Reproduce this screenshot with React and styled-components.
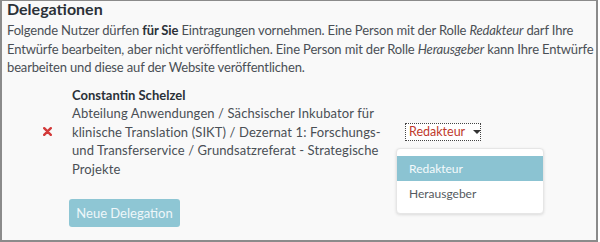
import React from "react";
import styled, { createGlobalStyle } from "styled-components";

const Global = createGlobalStyle`
  html, body {
    margin: 0;
    padding: 0;
    background: #ffffff;
  }
  * {
    box-sizing: border-box;
  }
`;

const Panel = styled.section`
  width: 598px;
  height: 242px;
  background: #f9f9f9;
  border: 2px solid #8b8b8b;
  border-top-width: 1px;
  padding: 0 0 0 5px;
  font-family: Lato, "Noto Sans", sans-serif;
  color: #4a4f55;
  overflow: hidden;
`;

const Title = styled.h2`
  margin: -2px 0 0;
  font-size: 16px;
  font-weight: 700;
  line-height: 20px;
  color: #2b3138;
`;

const Intro = styled.p`
  margin: 2px 0 0;
  font-size: 13px;
  line-height: 18.5px;
  letter-spacing: -0.15px;

  b {
    font-weight: 700;
    color: #2b3138;
  }
`;

const Row = styled.div`
  display: flex;
  align-items: center;
  margin-top: 9px;
  padding-left: 35px;
`;

const Remove = styled.button`
  display: flex;
  align-items: center;
  justify-content: center;
  width: 10px;
  height: 10px;
  padding: 0;
  border: 0;
  background: none;
  cursor: pointer;
`;

const Person = styled.div`
  width: 318px;
  margin-left: 20px;
  font-size: 13px;
  line-height: 18.5px;
  letter-spacing: 0.1px;
`;

const Name = styled.div`
  font-weight: 700;
  color: #2b3138;
  letter-spacing: 0;
`;

const RoleBox = styled.div`
  position: relative;
  margin-left: 15px;
  margin-top: 0;
`;

const Select = styled.div`
  display: flex;
  align-items: center;
  gap: 8px;
  width: 76px;
  height: 18px;
  padding: 0 0 0 3px;
  border: 1px dotted #444;
  background: #ffffff;
  color: #c0392b;
  font-size: 12.5px;
  line-height: 16px;
`;

const Caret = styled.span`
  width: 0;
  height: 0;
  border-left: 4px solid transparent;
  border-right: 4px solid transparent;
  border-top: 4px solid #333;
  margin-top: 1px;
`;

const Menu = styled.ul`
  position: absolute;
  top: 25px;
  left: -9px;
  width: 148px;
  margin: 0;
  padding: 7px 0;
  list-style: none;
  background: #ffffff;
  border: 1px solid #e6e6e6;
  border-radius: 4px;
  box-shadow: 0 1px 3px rgba(0, 0, 0, 0.12);
`;

const Option = styled.li`
  height: 25px;
  padding-left: 12px;
  font-size: 12px;
  line-height: 25px;
  background: ${(p) => (p.$active ? "#8bc3d2" : "transparent")};
  color: ${(p) => (p.$active ? "#f4fafc" : "#555a60")};
`;

const AddButton = styled.button`
  display: block;
  margin: 21px 0 0 62px;
  width: 111px;
  height: 28px;
  padding: 0;
  border: 0;
  border-radius: 3px;
  background: #8ec6d4;
  color: #eef7fa;
  font-family: inherit;
  font-size: 13px;
`;

const CrossIcon = () => (
  <svg width="9" height="9" viewBox="0 0 9 9">
    <path
      d="M1.2 1.2 L7.8 7.8 M7.8 1.2 L1.2 7.8"
      stroke="#d33a3a"
      strokeWidth="2.4"
      strokeLinecap="round"
    />
  </svg>
);

const App = () => {
  return (
    <>
      <Global />
      <Panel>
        <Title>Delegationen</Title>
        <Intro>
          Folgende Nutzer dürfen <b>für Sie</b> Eintragungen vornehmen. Eine
          Person mit der Rolle <i>Redakteur</i> darf Ihre Entwürfe bearbeiten,
          aber nicht veröffentlichen. Eine Person mit der Rolle{" "}
          <i>Herausgeber</i> kann Ihre Entwürfe bearbeiten und diese auf der
          Website veröffentlichen.
        </Intro>
        <Row>
          <Remove aria-label="Entfernen">
            <CrossIcon />
          </Remove>
          <Person>
            <Name>Constantin Schelzel</Name>
            Abteilung Anwendungen / Sächsischer Inkubator für
            <br />
            klinische Translation (SIKT) / Dezernat 1: Forschungs-
            <br />
            und Transferservice / Grundsatzreferat - Strategische
            <br />
            Projekte
          </Person>
          <RoleBox>
            <Select>
              Redakteur
              <Caret />
            </Select>
            <Menu>
              <Option $active>Redakteur</Option>
              <Option>Herausgeber</Option>
            </Menu>
          </RoleBox>
        </Row>
        <AddButton>Neue Delegation</AddButton>
      </Panel>
    </>
  );
};

export default App;
